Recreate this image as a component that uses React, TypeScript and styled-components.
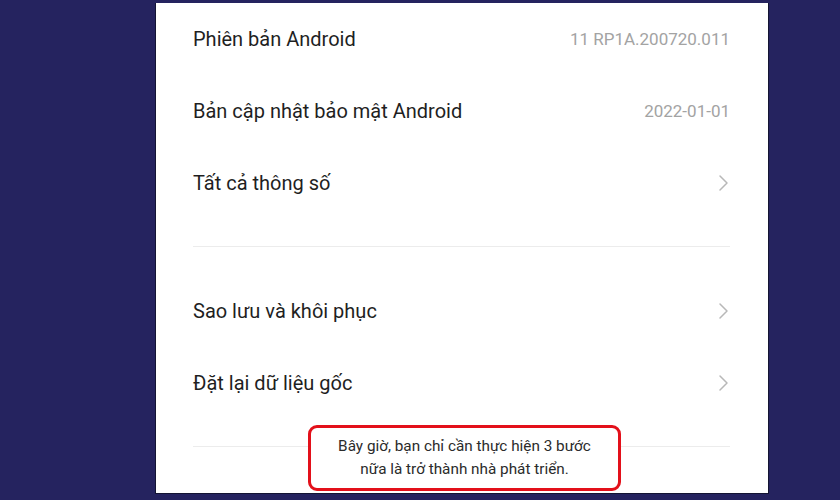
import React from "react";
import styled, { createGlobalStyle } from "styled-components";

const Global = createGlobalStyle`
  html, body { margin: 0; padding: 0; }
  body { background: #25235f; font-family: Roboto, "Noto Sans", sans-serif; }
`;

const Stage = styled.div`
  width: 840px;
  height: 500px;
  background: #25235f;
  display: flex;
  justify-content: flex-start;
  padding: 3px 0 0 155px;
  box-sizing: border-box;
  overflow: hidden;
`;

const Panel = styled.div`
  position: relative;
  width: 614px;
  height: 491px;
  background: #fff;
  border-left: 1px solid #141433;
  border-right: 1px solid #141433;
  border-bottom: 1px solid #141433;
  padding: 0 38px 0 37px;
  box-sizing: border-box;
  display: flex;
  flex-direction: column;
`;

const Row = styled.div`
  height: 72px;
  display: flex;
  align-items: center;
  justify-content: space-between;
`;

const Label = styled.span`
  font-size: 20px;
  color: #1f1f1f;
`;

const Value = styled.span`
  font-size: 17px;
  color: #a3a3a3;
`;

const Divider = styled.div<{ $before: number; $after: number }>`
  height: 1px;
  background: #ececec;
  margin-top: ${(p) => p.$before}px;
  margin-bottom: ${(p) => p.$after}px;
`;

const Toast = styled.div`
  position: absolute;
  left: 152px;
  top: 422px;
  width: 313px;
  height: 66px;
  box-sizing: border-box;
  border: 3px solid #e3101a;
  border-radius: 9px;
  background: #fff;
  display: flex;
  align-items: center;
  justify-content: center;
  text-align: center;
  font-size: 15.3px;
  line-height: 23px;
  color: #2b2b2b;
`;

const Chevron = () => (
  <svg width="12" height="18" viewBox="0 0 12 18" fill="none">
    <path d="M2 2 L9 9 L2 16" stroke="#b8b8b8" strokeWidth="1.5" strokeLinecap="round" strokeLinejoin="round" />
  </svg>
);

export default function App() {
  return (
    <>
      <Global />
      <Stage>
        <Panel>
          <Row>
            <Label>Phiên bản Android</Label>
            <Value>11 RP1A.200720.011</Value>
          </Row>
          <Row>
            <Label>Bản cập nhật bảo mật Android</Label>
            <Value>2022-01-01</Value>
          </Row>
          <Row>
            <Label>Tất cả thông số</Label>
            <Chevron />
          </Row>
          <Divider $before={27} $after={28} />
          <Row>
            <Label>Sao lưu và khôi phục</Label>
            <Chevron />
          </Row>
          <Row>
            <Label>Đặt lại dữ liệu gốc</Label>
            <Chevron />
          </Row>
          <Divider $before={27} $after={0} />
          <Toast>
            Bây giờ, bạn chỉ cần thực hiện 3 bước
            <br />
            nữa là trở thành nhà phát triển.
          </Toast>
        </Panel>
      </Stage>
    </>
  );
}
